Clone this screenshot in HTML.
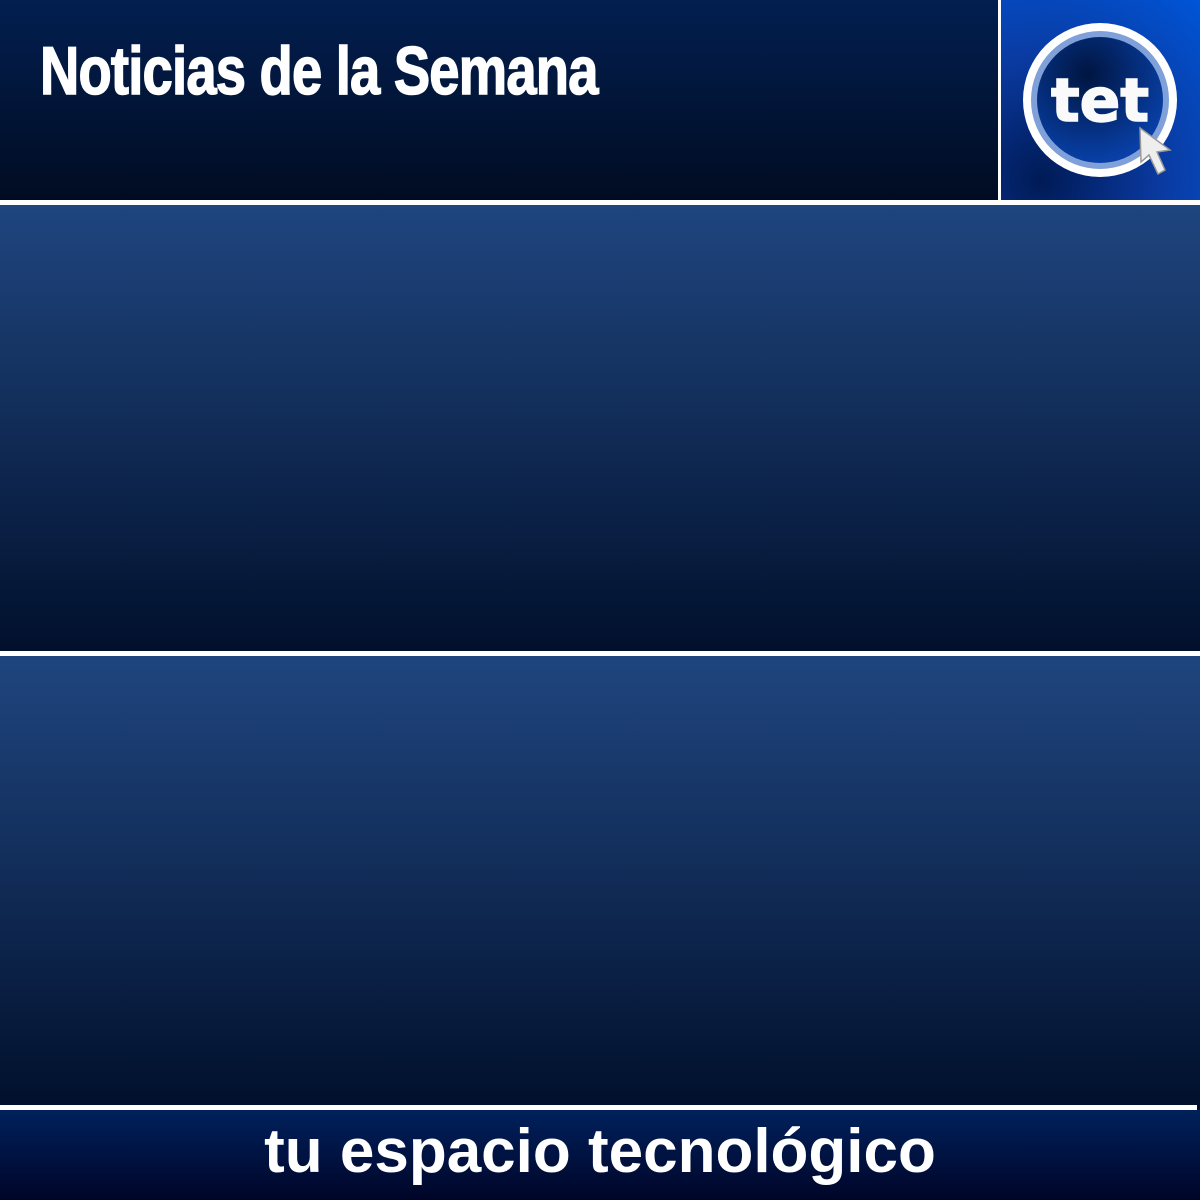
<!DOCTYPE html>
<html><head><meta charset="utf-8"><style>
body{margin:0;width:1200px;height:1200px;background:#fff;position:relative;overflow:hidden;font-family:"Liberation Sans",sans-serif}
div{position:absolute}
.hdr{left:0;top:0;width:998px;height:200px;background:linear-gradient(#021f50,#010c22)}
.logo{left:1001px;top:0;width:199px;height:200px;background:radial-gradient(circle at 20% 90%,#001a55,#0a3aa0 50%,#0055d8 100%)}
.p{left:0;width:1200px;background:linear-gradient(#1f457f,#14315f 40%,#01102c)}
.ftr{left:0;top:1110px;width:1200px;height:90px;background:linear-gradient(#00215c,#000528)}
.title{left:40px;top:32px;color:#fff;font:bold 68px "Liberation Sans Narrow","Liberation Sans",sans-serif;transform-origin:left top;transform:scaleX(0.80);white-space:nowrap;letter-spacing:-1px;-webkit-text-stroke:1.5px #fff}
.foot{left:0;width:1200px;top:1116px;text-align:center;color:#fff;font:bold 62px "Liberation Sans",sans-serif}
</style></head><body>
<div class="hdr"></div>
<div class="logo">
<svg width="199" height="200" viewBox="1001 0 199 200">
<defs><radialGradient id="g" cx="0.4" cy="0.3" r="0.7"><stop offset="0" stop-color="#001540"/><stop offset="1" stop-color="#0840a8"/></radialGradient></defs>
<circle cx="1100" cy="100" r="77" fill="#fff"/>
<circle cx="1100" cy="100" r="69" fill="#7fa0d8"/>
<circle cx="1100" cy="100" r="63" fill="url(#g)"/>
<text x="1100" y="121" text-anchor="middle" fill="#fafafa" font-family="DejaVu Sans,sans-serif" font-weight="bold" font-size="60" stroke="#fafafa" stroke-width="1.5">tet</text>
<path d="M1140 128 L1141 162 L1149 155 L1158 174 L1165 170 L1157 152 L1170 150 Z" fill="#eee" stroke="#999" stroke-width="1.5"/>
</svg>
</div>
<div class="title">Noticias de la Semana</div>
<div class="p" style="top:205px;height:446px"></div>
<div class="p" style="top:656px;height:449px"></div>
<div style="left:1197px;top:1105px;width:3px;height:5px;background:#01102c"></div>
<div class="ftr"></div>
<div class="foot">tu espacio tecnológico</div>
</body></html>
